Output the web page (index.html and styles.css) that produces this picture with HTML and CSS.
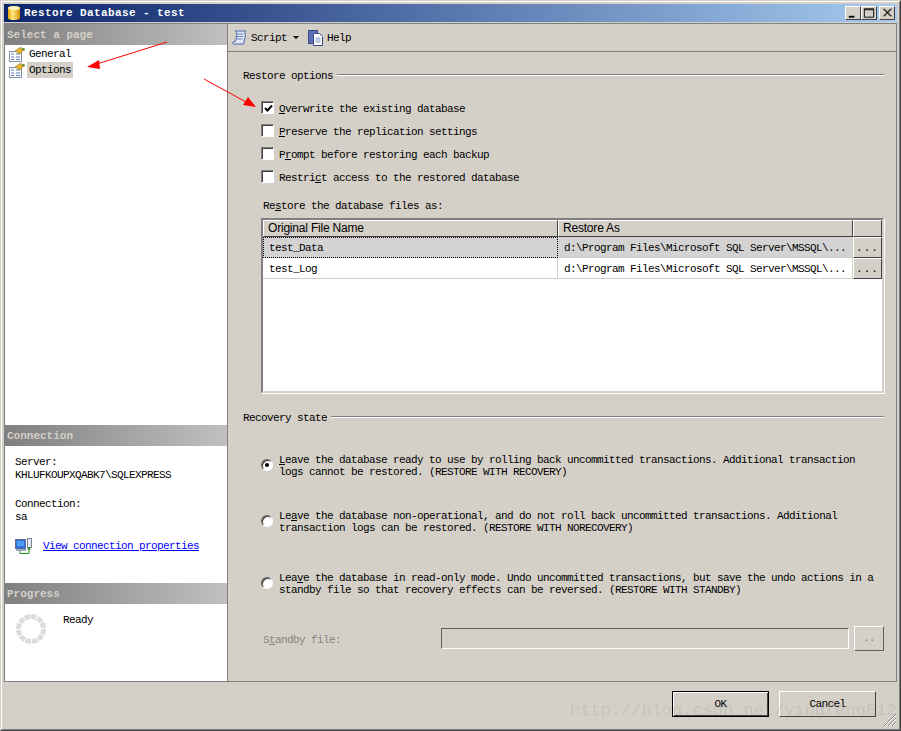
FILE: index.html
```html
<!DOCTYPE html>
<html lang="en">
<head>
    <meta charset="UTF-8">
    <title>Restore Database - test</title>
    <link rel="stylesheet" href="styles.css">
</head>
<body>
    <div class="window">
        <div class="window-inner">
            <!-- Title bar -->
            <div class="titlebar">
                <svg class="title-icon" width="14" height="16" viewBox="0 0 14 16">
                    <defs>
                        <linearGradient id="can" x1="0" x2="1" y1="0" y2="0">
                            <stop offset="0" stop-color="#e8a800"/>
                            <stop offset="0.4" stop-color="#ffe88a"/>
                            <stop offset="1" stop-color="#d89000"/>
                        </linearGradient>
                    </defs>
                    <path d="M1 3 C1 0.5 13 0.5 13 3 V13 C13 15.7 1 15.7 1 13 Z" fill="url(#can)"/>
                    <ellipse cx="7" cy="3" rx="6" ry="2" fill="#fff2b8"/>
                </svg>
                <span class="title-text">Restore Database - test</span>
                <div class="window-btns">
                    <div class="win-btn">
                        <svg width="15" height="14" viewBox="0 0 15 14"><path d="M3 10h6v2H3z" fill="#000"/></svg>
                    </div>
                    <div class="win-btn">
                        <svg width="15" height="14" viewBox="0 0 15 14"><path d="M2.5 2.5h10v9h-10z M2.5 3.5h10" fill="none" stroke="#000"/></svg>
                    </div>
                    <div class="win-btn win-close">
                        <svg width="15" height="14" viewBox="0 0 15 14"><path d="M3.5 2.5l8 8M4.5 2.5l8 8M11.5 2.5l-8 8M12.5 2.5l-8 8" stroke="#000" fill="none"/></svg>
                    </div>
                </div>
            </div>

            <div class="main">
                <!-- Sidebar -->
                <div class="sidebar">
                    <div class="side-pages">
                        <div class="side-head">Select a page</div>
                        <ul class="page-list">
                            <li class="page-item">
                                <svg width="16" height="15" viewBox="0 0 16 15">
                                    <rect x="0.5" y="4.5" width="12" height="10" fill="#fff" stroke="#7f8fa8"/>
                                    <path d="M2 7h3M7 7h4M2 10h3M7 10h4M2 12.5h3M7 12.5h4" stroke="#5a78b8"/>
                                    <path d="M6 4 L11 0.5 L15.5 2 L11 7 Z" fill="#e8b830" stroke="#8a7020" stroke-width="0.6"/>
                                    <path d="M12 2 L15.5 1 L15.5 4 Z" fill="#5c8c3c"/>
                                </svg>
                                <span class="page-name">General</span>
                            </li>
                            <li class="page-item">
                                <svg width="16" height="15" viewBox="0 0 16 15">
                                    <rect x="0.5" y="4.5" width="12" height="10" fill="#fff" stroke="#7f8fa8"/>
                                    <path d="M2 7h3M7 7h4M2 10h3M7 10h4M2 12.5h3M7 12.5h4" stroke="#5a78b8"/>
                                    <path d="M6 4 L11 0.5 L15.5 2 L11 7 Z" fill="#e8b830" stroke="#8a7020" stroke-width="0.6"/>
                                    <path d="M12 2 L15.5 1 L15.5 4 Z" fill="#5c8c3c"/>
                                </svg>
                                <span class="page-name selected">Options</span>
                            </li>
                        </ul>
                    </div>

                    <div class="side-connection">
                        <div class="side-head">Connection</div>
                        <div class="conn-body">
                            <div class="conn-line">Server:</div>
                            <div class="conn-line">KHLUFKOUPXQABK7\SQLEXPRESS</div>
                            <div class="conn-line conn-gap">Connection:</div>
                            <div class="conn-line">sa</div>
                            <div class="conn-link">
                                <svg width="17" height="16" viewBox="0 0 17 16">
                                    <rect x="0.5" y="1.5" width="10" height="9" fill="#2f6fe0" stroke="#5a6a90"/>
                                    <rect x="2" y="3" width="7" height="5" fill="#4aa0f0"/>
                                    <rect x="1" y="11" width="10" height="2" fill="#9aa8c8"/>
                                    <rect x="12.5" y="0.5" width="4" height="9" fill="#e8e8f0" stroke="#7a8090"/>
                                    <path d="M5 13v2.5h9V10" fill="none" stroke="#1c8c1c"/>
                                    <path d="M12 11.5l2-2.5 2 2.5z" fill="#1c8c1c"/>
                                </svg>
                                <a href="#">View connection properties</a>
                            </div>
                        </div>
                    </div>

                    <div class="side-progress">
                        <div class="side-head">Progress</div>
                        <div class="progress-body">
                            <svg width="30" height="30" viewBox="-15 -15 30 30">
                                <g fill="none" stroke="#dcdcdc" stroke-width="5" stroke-dasharray="5.5 1">
                                    <circle r="12.5"/>
                                </g>
                            </svg>
                            <span class="progress-text">Ready</span>
                        </div>
                    </div>
                </div>

                <!-- Options page -->
                <div class="pane">
                    <div class="toolbar">
                        <svg width="16" height="16" viewBox="0 0 16 16">
                            <path d="M3 1h11c-1.5 1-1.5 3-.5 4l-2 9H1c-.5-1 0-2.5 1-2.500h1.500L5 4C5 2.500 4 1.500 3 1z" fill="#dfe6f5" stroke="#4f6aa8"/>
                            <path d="M5.500 4h6M5 6.500h6M4.500 9h6" stroke="#7088c0"/>
                        </svg>
                        <span class="tool-label">Script</span>
                        <span class="tool-caret"></span>
                        <svg width="16" height="16" viewBox="0 0 16 16">
                            <rect x="0.5" y="0.5" width="9" height="13" fill="#5a70b8" stroke="#3a4a88"/>
                            <path d="M5.500 3.500h6l3 3v9h-9z" fill="#fff" stroke="#3a4a88"/>
                            <path d="M7.500 8h5M7.500 10h5M7.500 12h5" stroke="#7a8ac0"/>
                        </svg>
                        <span class="tool-label">Help</span>
                    </div>

                    <div class="section-head first">
                        <span>Restore options</span>
                        <div class="rule"></div>
                    </div>

                    <div class="options">
                        <div class="check-row">
                            <span class="check">
                                <svg width="9" height="9" viewBox="0 0 9 9"><path d="M1 4l2.500 2.500L8 1.500" fill="none" stroke="#000" stroke-width="2"/></svg>
                            </span>
                            <span class="check-label"><u>O</u>verwrite the existing database</span>
                        </div>
                        <div class="check-row">
                            <span class="check"></span>
                            <span class="check-label"><u>P</u>reserve the replication settings</span>
                        </div>
                        <div class="check-row">
                            <span class="check"></span>
                            <span class="check-label">P<u>r</u>ompt before restoring each backup</span>
                        </div>
                        <div class="check-row">
                            <span class="check"></span>
                            <span class="check-label">Restri<u>c</u>t access to the restored database</span>
                        </div>
                    </div>

                    <div class="files-label">Re<u>s</u>tore the database files as:</div>

                    <div class="files-grid">
                        <div class="head-cell">Original File Name</div>
                        <div class="head-cell">Restore As</div>
                        <div class="head-cell"></div>

                        <div class="cell row-selected cell-focus">test_Data</div>
                        <div class="cell row-selected">d:\Program Files\Microsoft SQL Server\MSSQL\...</div>
                        <div class="cell-btn"><span class="dots">...</span></div>

                        <div class="cell">test_Log</div>
                        <div class="cell">d:\Program Files\Microsoft SQL Server\MSSQL\...</div>
                        <div class="cell-btn"><span class="dots">...</span></div>
                    </div>

                    <div class="section-head second">
                        <span>Recovery state</span>
                        <div class="rule"></div>
                    </div>

                    <div class="radio-row radio-first">
                        <span class="radio checked"></span>
                        <div class="radio-label"><u>L</u>eave the database ready to use by rolling back uncommitted transactions. Additional transaction<br>logs cannot be restored. (RESTORE WITH RECOVERY)</div>
                    </div>
                    <div class="radio-row radio-second">
                        <span class="radio"></span>
                        <div class="radio-label">Le<u>a</u>ve the database non-operational, and do not roll back uncommitted transactions. Additional<br>transaction logs can be restored. (RESTORE WITH NORECOVERY)</div>
                    </div>
                    <div class="radio-row radio-third">
                        <span class="radio"></span>
                        <div class="radio-label">Lea<u>v</u>e the database in read-only mode. Undo uncommitted transactions, but save the undo actions in a<br>standby file so that recovery effects can be reversed. (RESTORE WITH STANDBY)</div>
                    </div>

                    <div class="standby-row">
                        <span class="standby-label">S<u>t</u>andby file:</span>
                        <div class="standby-input"></div>
                        <div class="standby-btn">..</div>
                    </div>
                </div>
            </div>

            <!-- Dialog buttons -->
            <div class="footer">
                <div class="dlg-btn default-btn">OK</div>
                <div class="dlg-btn">Cancel</div>
            </div>
        </div>
    </div>

    <!-- Red arrows drawn over the screenshot -->
    <svg class="arrows" width="901" height="731" viewBox="0 0 901 731">
        <path d="M167 42L97 64" stroke="#f00" fill="none"/>
        <path d="M87 67L99 60L100 69Z" fill="#f00"/>
        <path d="M204 79L246 102" stroke="#f00" fill="none"/>
        <path d="M256 107L243 105L248 97Z" fill="#f00"/>
    </svg>

    <svg class="grip" width="14" height="14" viewBox="0 0 14 14">
        <path d="M13 1L1 13M13 5L5 13M13 9L9 13" stroke="#808080" fill="none"/>
        <path d="M13 2L2 13M13 6L6 13M13 10L10 13" stroke="#fff" fill="none"/>
    </svg>

    <div class="watermark">http://blog.csdn.net/yingfeng612</div>
</body>
</html>
```

FILE: styles.css
```css
body {
    margin: 0;
    background-color: #d4d0c8;
    font-family: "Liberation Mono", monospace;
    font-size: 11px;
    letter-spacing: -0.6px;
    line-height: 12px;
    color: #000;
    width: 901px;
    height: 731px;
    overflow: hidden;
    position: relative;
}

u {
    text-decoration: underline;
}

/* Window frame */
.window {
    box-sizing: border-box;
    width: 901px;
    height: 731px;
    border: 1px solid;
    border-color: #d4d0c8 #404040 #404040 #d4d0c8;
}

.window-inner {
    box-sizing: border-box;
    height: 100%;
    border: 1px solid;
    border-color: #fff #808080 #808080 #fff;
    padding: 2px;
}

/* Title bar */
.titlebar {
    display: flex;
    align-items: center;
    height: 18px;
    margin-bottom: 1px;
    background: linear-gradient(to right, #0a246a, #a6caf0);
    color: #fff;
    font-weight: bold;
    letter-spacing: 0.4px;
}

.title-icon {
    margin-left: 3px;
    margin-right: 3px;
}

.title-text {
    flex: 1;
}

.window-btns {
    display: flex;
    margin-right: 2px;
}

.win-btn {
    box-sizing: border-box;
    width: 16px;
    height: 14px;
    background: #d4d0c8;
    border: 1px solid;
    border-color: #fff #404040 #404040 #fff;
    overflow: hidden;
    display: flex;
    align-items: center;
    justify-content: center;
}

.win-close {
    margin-left: 2px;
}

/* Main area */
.main {
    display: flex;
    height: 659px;
    box-sizing: border-box;
    border: 1px solid #808080;
}

.sidebar {
    width: 222px;
    background: #fff;
    border-right: 1px solid #808080;
    display: flex;
    flex-direction: column;
}

.side-pages {
    height: 401px;
}

.side-connection {
    height: 158px;
}

.side-progress {
    flex: 1;
}

.side-head {
    height: 21px;
    line-height: 23px;
    padding-left: 2px;
    background: linear-gradient(to right, #808080, #c0c0c0);
    color: #d4d0c8;
    font-weight: bold;
    letter-spacing: 0;
}

.page-list {
    list-style: none;
    margin: 0;
    padding: 1px 0 0 4px;
}

.page-item {
    display: flex;
    align-items: center;
    height: 16px;
    gap: 2px;
}

.page-name {
    padding: 2px 2px;
}

.page-name.selected {
    background: #d4d0c8;
}

.conn-body {
    padding: 10px 0 0 10px;
}

.conn-line {
    height: 12px;
    margin-bottom: 1px;
}

.conn-gap {
    margin-top: 17px;
}

.conn-link {
    display: flex;
    align-items: center;
    gap: 11px;
    margin-top: 15px;
}

.conn-link a {
    color: #0000ff;
}

.progress-body {
    display: flex;
    padding: 10px 0 0 11px;
}

.progress-text {
    margin-left: 17px;
}

/* Right pane */
.pane {
    flex: 1;
    padding: 0 12px 0 15px;
}

.toolbar {
    display: flex;
    align-items: center;
    gap: 3px;
    box-sizing: border-box;
    height: 28px;
    margin: 0 -12px 0 -15px;
    padding-left: 4px;
    border-bottom: 1px solid #808080;
}

.tool-caret {
    width: 0;
    height: 0;
    border: 3px solid transparent;
    border-top: 3px solid #000;
    border-bottom: 0;
    margin: 0 6px 0 3px;
}

.section-head {
    display: flex;
    align-items: center;
    gap: 4px;
    height: 12px;
}

.section-head span {
    padding-top: 2px;
}

.section-head.first {
    margin-top: 17px;
}

.section-head.second {
    margin-top: 18px;
}

.rule {
    flex: 1;
    border-top: 1px solid #808080;
    border-bottom: 1px solid #fff;
}

.options {
    margin-top: 15px;
}

.check-row {
    display: flex;
    align-items: center;
    height: 23px;
    padding-left: 18px;
    gap: 5px;
}

.check-label {
    padding-top: 2px;
}

.check {
    box-sizing: border-box;
    width: 13px;
    height: 13px;
    background: #fff;
    border: 1px solid;
    border-color: #808080 #fff #fff #808080;
    box-shadow: inset 1px 1px 0 #404040;
    display: flex;
    align-items: center;
    justify-content: center;
    padding: 1px 0 0 1px;
}

.files-label {
    margin: 11px 0 0 20px;
    height: 12px;
    padding-top: 1px;
    box-sizing: content-box;
    margin-bottom: -1px;
}

.files-grid {
    box-sizing: border-box;
    margin: 7px 0 0 18px;
    width: 623px;
    height: 175px;
    background: #fff;
    border: 2px solid;
    border-color: #808080 #d4d0c8 #d4d0c8 #808080;
    box-shadow: 1px 1px 0 #fff;
    display: grid;
    grid-template-columns: 295px 295px 29px;
    grid-template-rows: 17px 21px 21px;
    align-content: start;
}

.head-cell {
    box-sizing: border-box;
    background: #d4d0c8;
    border: 1px solid;
    border-color: #fff #404040 #404040 #fff;
    font-family: "Liberation Sans", sans-serif;
    font-size: 12px;
    letter-spacing: -0.2px;
    line-height: 15px;
    padding-left: 4px;
}

.cell {
    box-sizing: border-box;
    border-right: 1px solid #d4d0c8;
    border-bottom: 1px solid #d4d0c8;
    line-height: 22px;
    padding-left: 6px;
}

.row-selected {
    background: #d3d3d3;
}

.cell-focus {
    outline: 1px dotted #000;
    outline-offset: -1px;
}

.cell-btn {
    box-sizing: border-box;
    background: #d4d0c8;
    border: 1px solid;
    border-color: #fff #404040 #404040 #fff;
    text-align: center;
    line-height: 20px;
}

.dots {
    letter-spacing: 1px;
}

.radio-row {
    display: flex;
    padding-left: 18px;
    gap: 6px;
    height: 24px;
}

.radio-label {
    padding-top: 1px;
}

.radio-first {
    margin-top: 30px;
}

.radio-second {
    margin-top: 32px;
}

.radio-third {
    margin-top: 38px;
}

.radio {
    box-sizing: border-box;
    width: 12px;
    height: 12px;
    margin-top: 6px;
    border-radius: 50%;
    background: #fff;
    border: 1px solid;
    border-color: #606060 #fff #fff #606060;
    box-shadow: inset 1px 1px 0 #404040;
    flex: none;
    position: relative;
}

.radio.checked::after {
    content: "";
    position: absolute;
    left: 3px;
    top: 3px;
    width: 4px;
    height: 4px;
    border-radius: 50%;
    background: #000;
}

.standby-row {
    display: flex;
    align-items: center;
    margin-top: 31px;
    height: 25px;
    padding-left: 20px;
    color: #85837c;
}

.standby-label {
    width: 178px;
    padding-top: 2px;
}

.standby-input {
    box-sizing: border-box;
    width: 408px;
    height: 21px;
    border: 1px solid;
    border-color: #606060 #fff #fff #606060;
}

.standby-btn {
    box-sizing: border-box;
    width: 30px;
    height: 25px;
    margin-left: 5px;
    border: 1px solid;
    border-color: #fff #606060 #606060 #fff;
    text-align: center;
    line-height: 22px;
}

/* Dialog buttons */
.footer {
    display: flex;
    justify-content: flex-end;
    gap: 10px;
    padding: 9px 21px 0 0;
}

.dlg-btn {
    box-sizing: border-box;
    width: 97px;
    height: 26px;
    border: 1px solid;
    border-color: #fff #404040 #404040 #fff;
    text-align: center;
    line-height: 25px;
}

.default-btn {
    border-color: #000;
    box-shadow: inset 1px 1px 0 #fff, inset -1px -1px 0 #404040;
}

/* Things lying over the dialog */
.arrows {
    position: absolute;
    left: 0;
    top: 0;
    pointer-events: none;
}

.grip {
    position: absolute;
    right: 4px;
    bottom: 4px;
}

.watermark {
    position: absolute;
    left: 570px;
    top: 701px;
    font-size: 17px;
    line-height: 20px;
    letter-spacing: 0;
    color: rgba(120, 116, 108, 0.16);
}
```
